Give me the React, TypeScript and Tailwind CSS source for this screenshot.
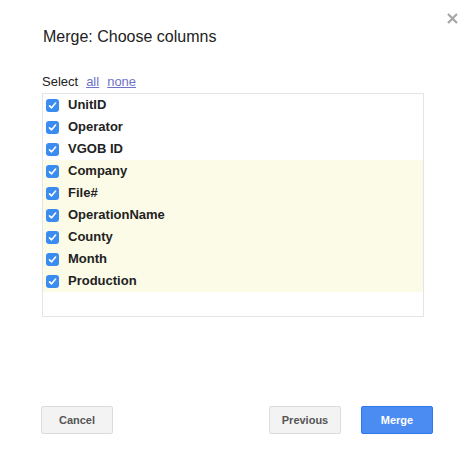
import React, { useState } from 'react';

const columns = [
  { name: 'UnitID', hl: false },
  { name: 'Operator', hl: false },
  { name: 'VGOB ID', hl: false },
  { name: 'Company', hl: true },
  { name: 'File#', hl: true },
  { name: 'OperationName', hl: true },
  { name: 'County', hl: true },
  { name: 'Month', hl: true },
  { name: 'Production', hl: true },
];

function Check({ on }: { on: boolean }) {
  return (
    <span
      className={`w-[13px] h-[13px] rounded-[3px] flex items-center justify-center shrink-0 ${
        on ? 'bg-[#3b8cf0]' : 'bg-white border border-[#aaa]'
      }`}
    >
      {on && (
        <svg width="9" height="9" viewBox="0 0 9 9">
          <path d="M1.5 4.8 L3.6 6.8 L7.6 2" fill="none" stroke="#fff" strokeWidth="1.6" strokeLinecap="round" strokeLinejoin="round" />
        </svg>
      )}
    </span>
  );
}

export default function App() {
  const [checked, setChecked] = useState<boolean[]>(columns.map(() => true));

  return (
    <div className="w-[469px] h-[460px] bg-white relative font-['Liberation_Sans',Arial,sans-serif] text-[#222]">
      <button className="absolute left-[446px] top-[12px] w-[13px] h-[13px]">
        <svg width="13" height="13" viewBox="0 0 13 13">
          <path d="M2 2 L11 11 M11 2 L2 11" stroke="#a6a6a6" strokeWidth="2.2" />
        </svg>
      </button>

      <div className="pl-[42px] pr-[45px] pt-[27px]">
        <h1 className="text-[16px] leading-[20px] pl-[1px]">Merge: Choose columns</h1>

        <div className="mt-[27px] text-[13px] leading-[16px] flex gap-[8px]">
          <span>Select</span>
          <a className="text-[#6f74c8] underline cursor-pointer" onClick={() => setChecked(columns.map(() => true))}>all</a>
          <a className="text-[#6f74c8] underline cursor-pointer" onClick={() => setChecked(columns.map(() => false))}>none</a>
        </div>

        <div className="mt-[3px] w-[382px] h-[224px] border border-[#e5e5e5]">
          {columns.map((c, i) => (
            <div
              key={c.name}
              onClick={() => setChecked(checked.map((v, j) => (j === i ? !v : v)))}
              className={`h-[22px] flex items-center pl-[3px] gap-[9px] cursor-pointer ${c.hl ? 'bg-[#fcfbe7]' : ''}`}
            >
              <Check on={checked[i]} />
              <span className="text-[13px] font-bold text-[#222]">{c.name}</span>
            </div>
          ))}
        </div>
      </div>

      <div className="absolute left-[41px] right-[36px] top-[406px] flex text-[11px] font-bold">
        <button className="w-[72px] h-[28px] rounded-[2px] border border-[#dcdcdc] bg-[#f3f3f3] text-[#555]">Cancel</button>
        <div className="flex-1" />
        <button className="w-[72px] h-[28px] rounded-[2px] border border-[#dcdcdc] bg-[#f3f3f3] text-[#555]">Previous</button>
        <button className="ml-[20px] w-[72px] h-[28px] rounded-[2px] border border-[#3079ed] bg-[#4b8cf2] text-white">Merge</button>
      </div>
    </div>
  );
}
